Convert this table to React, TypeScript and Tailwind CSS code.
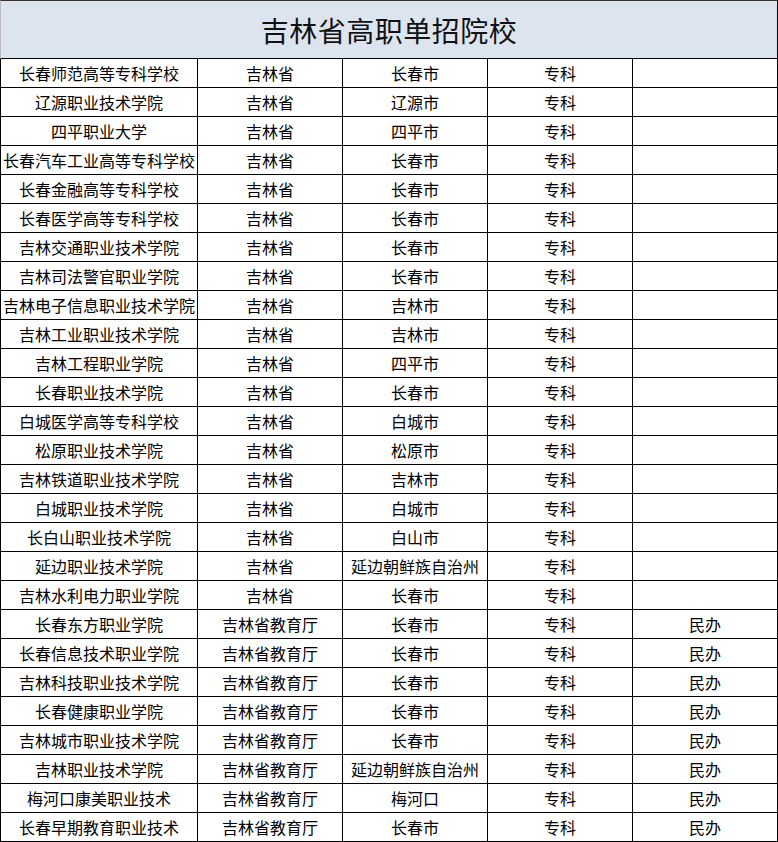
import React from 'react';

type Row = [string, string, string, string, string];

const rows: Row[] = [
  ['长春师范高等专科学校', '吉林省', '长春市', '专科', ''],
  ['辽源职业技术学院', '吉林省', '辽源市', '专科', ''],
  ['四平职业大学', '吉林省', '四平市', '专科', ''],
  ['长春汽车工业高等专科学校', '吉林省', '长春市', '专科', ''],
  ['长春金融高等专科学校', '吉林省', '长春市', '专科', ''],
  ['长春医学高等专科学校', '吉林省', '长春市', '专科', ''],
  ['吉林交通职业技术学院', '吉林省', '长春市', '专科', ''],
  ['吉林司法警官职业学院', '吉林省', '长春市', '专科', ''],
  ['吉林电子信息职业技术学院', '吉林省', '吉林市', '专科', ''],
  ['吉林工业职业技术学院', '吉林省', '吉林市', '专科', ''],
  ['吉林工程职业学院', '吉林省', '四平市', '专科', ''],
  ['长春职业技术学院', '吉林省', '长春市', '专科', ''],
  ['白城医学高等专科学校', '吉林省', '白城市', '专科', ''],
  ['松原职业技术学院', '吉林省', '松原市', '专科', ''],
  ['吉林铁道职业技术学院', '吉林省', '吉林市', '专科', ''],
  ['白城职业技术学院', '吉林省', '白城市', '专科', ''],
  ['长白山职业技术学院', '吉林省', '白山市', '专科', ''],
  ['延边职业技术学院', '吉林省', '延边朝鲜族自治州', '专科', ''],
  ['吉林水利电力职业学院', '吉林省', '长春市', '专科', ''],
  ['长春东方职业学院', '吉林省教育厅', '长春市', '专科', '民办'],
  ['长春信息技术职业学院', '吉林省教育厅', '长春市', '专科', '民办'],
  ['吉林科技职业技术学院', '吉林省教育厅', '长春市', '专科', '民办'],
  ['长春健康职业学院', '吉林省教育厅', '长春市', '专科', '民办'],
  ['吉林城市职业技术学院', '吉林省教育厅', '长春市', '专科', '民办'],
  ['吉林职业技术学院', '吉林省教育厅', '延边朝鲜族自治州', '专科', '民办'],
  ['梅河口康美职业技术', '吉林省教育厅', '梅河口', '专科', '民办'],
  ['长春早期教育职业技术', '吉林省教育厅', '长春市', '专科', '民办'],
];

const font = { fontFamily: '"Noto Sans CJK SC", "Liberation Sans", sans-serif' };

// 吉林省高职单招院校表
export default function App() {
  return (
    <div className="w-[778px] h-[842px] bg-white overflow-hidden" style={font}>
      <div className="h-[59px] flex items-center justify-center bg-[#dce4f0] border-t border-t-[#333] border-b border-b-black border-l border-l-[#bbb] border-r border-r-black">
        <span className="text-[28px] leading-none text-[#111] tracking-[0.5px]">吉林省高职单招院校</span>
      </div>
      <div className="grid grid-cols-[197px_145px_145px_145px_145px] border-l border-black">
        {rows.map((r, i) => (
          <React.Fragment key={i}>
            {r.map((c, j) => (
              <div
                key={j}
                className="h-[29px] flex items-center justify-center border-r border-b border-black text-[16px] leading-none text-black whitespace-nowrap"
              >
                {c}
              </div>
            ))}
          </React.Fragment>
        ))}
      </div>
    </div>
  );
}
